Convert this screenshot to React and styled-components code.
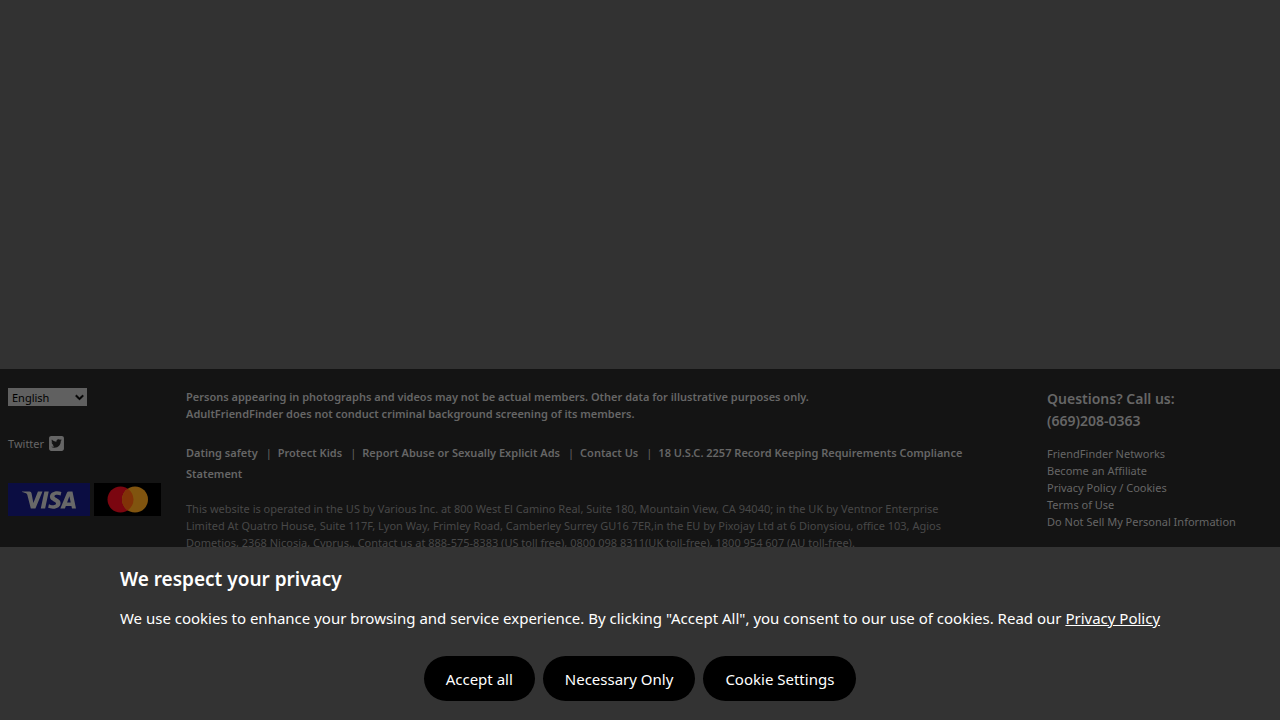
import React from "react";
import styled, { createGlobalStyle } from "styled-components";
import { FaChevronDown } from "react-icons/fa";
import { FaSquareTwitter } from "react-icons/fa6";
import { SiVisa } from "react-icons/si";

const GlobalStyle = createGlobalStyle`
  *, *::before, *::after { box-sizing: border-box; }
  body {
    margin: 0;
    background: #323232;
    color: #666;
    font: 11px/17px "Noto Sans", "Open Sans", sans-serif;
  }
  a { color: inherit; text-decoration: none; }
`;

const Page = styled.div`
  min-height: 100vh;
  display: flex;
  flex-direction: column;
`;

const Blank = styled.main`
  flex: 1;
`;

const Footer = styled.footer`
  display: grid;
  grid-template-columns: 178px 1fr 225px;
  padding: 19px 8px 169px;
  background: #141414;
`;

const Side = styled.div`
  display: flex;
  flex-direction: column;
  align-items: flex-start;
`;

const SelectWrap = styled.label`
  display: grid;
  align-items: center;
  width: 79px;
  height: 18px;
  color: #000;

  & > * { grid-area: 1 / 1; }
  svg {
    justify-self: end;
    margin-right: 3px;
    pointer-events: none;
    stroke: currentColor;
    stroke-width: 40px;
  }
`;

const Select = styled.select`
  appearance: none;
  width: 100%;
  height: 100%;
  padding: 0 4px;
  border: 0;
  border-radius: 0;
  background: #606060;
  color: #000;
  font: inherit;
`;

const Social = styled.a`
  display: flex;
  align-items: center;
  gap: 4px;
  margin-top: 29px;
`;

const Cards = styled.div`
  display: flex;
  gap: 4px;
  margin-top: 31px;
`;

const Card = styled.span`
  display: flex;
  align-items: center;
  justify-content: center;
  width: ${(p) => p.$width};
  height: 33px;
  background: ${(p) => p.$background};
  color: #686868;
`;

const Legal = styled.div`
  padding-right: 78px;
`;

const Notice = styled.p`
  margin: 0;
  font-weight: 600;
`;

const LinkLine = styled.nav`
  margin-top: 20px;
  font-weight: 600;
  line-height: 21px;

  a ~ a::before {
    content: "|";
    margin: 0 6px 0 8px;
    font-weight: 400;
  }
`;

const Address = styled.p`
  margin: 16px 0 0;
  color: #484848;
`;

const Phone = styled.p`
  margin: 0 0 13px;
  font-size: 14px;
  font-weight: 600;
  line-height: 22px;
`;

const LinkList = styled.ul`
  margin: 0;
  padding: 0;
  list-style: none;
  white-space: nowrap;
`;

const Banner = styled.section`
  position: fixed;
  inset: auto 0 0;
  display: flex;
  justify-content: center;
  padding: 18px 16px 19px;
  background: #333;
  color: #fff;
  font-size: 15px;
  line-height: 24px;
`;

const Title = styled.h2`
  margin: 0;
  font-size: 19px;
  font-weight: 600;
  line-height: 28px;
`;

const Message = styled.p`
  margin: 13px 0 26px;
  a { text-decoration: underline; }
`;

const Actions = styled.div`
  display: flex;
  flex-wrap: wrap;
  justify-content: center;
  gap: 8px;
`;

const Button = styled.button`
  height: 45px;
  padding: 0 22px;
  border: 0;
  border-radius: 23px;
  background: #000;
  color: #fff;
  font: inherit;
`;

const policies = [
  "Dating safety",
  "Protect Kids",
  "Report Abuse or Sexually Explicit Ads",
  "Contact Us",
  "18 U.S.C. 2257 Record Keeping Requirements Compliance Statement",
];

const company = [
  "FriendFinder Networks",
  "Become an Affiliate",
  "Privacy Policy / Cookies",
  "Terms of Use",
  "Do Not Sell My Personal Information",
];

function Mastercard() {
  return (
    <svg width="42" height="27" viewBox="0 0 42 27" role="img" aria-label="Mastercard">
      <circle cx="13.5" cy="13.5" r="13" fill="#7b0610" />
      <circle cx="28" cy="13.5" r="13" fill="#80540f" />
      <path d="M20.75 2.7a13 13 0 0 1 0 21.6a13 13 0 0 1 0-21.6" fill="#813208" />
    </svg>
  );
}

export default function App() {
  return (
    <Page>
      <GlobalStyle />
      <Blank />
      <Footer>
        <Side>
          <SelectWrap>
            <Select aria-label="Language" defaultValue="en">
              <option value="en">English</option>
            </Select>
            <FaChevronDown size={9} />
          </SelectWrap>
          <Social href="#twitter">
            Twitter <FaSquareTwitter size={17} />
          </Social>
          <Cards>
            <Card $width="82px" $background="#0b0d42">
              <SiVisa size={54} title="Visa" />
            </Card>
            <Card $width="67px" $background="#000">
              <Mastercard />
            </Card>
          </Cards>
        </Side>
        <Legal>
          <Notice>
            Persons appearing in photographs and videos may not be actual members. Other data for
            illustrative purposes only.
            <br />
            AdultFriendFinder does not conduct criminal background screening of its members.
          </Notice>
          <LinkLine aria-label="Policies">
            {policies.map((label) => (
              <React.Fragment key={label}>
                <a href="#policy">{label}</a>
                <wbr />
              </React.Fragment>
            ))}
          </LinkLine>
          <Address>
            This website is operated in the US by Various Inc. at 800 West El Camino Real, Suite
            180, Mountain View, CA 94040; in the UK by Ventnor Enterprise Limited At Quatro House,
            Suite 117F, Lyon Way, Frimley Road, Camberley Surrey GU16 7ER,in the EU by Pixojay Ltd
            at 6 Dionysiou, office 103, Agios Dometios, 2368 Nicosia, Cyprus.. Contact us at
            888-575-8383 (US toll free), 0800 098 8311(UK toll-free), 1800 954 607 (AU toll-free).
          </Address>
        </Legal>
        <div>
          <Phone>
            Questions? Call us:
            <br />
            (669)208-0363
          </Phone>
          <LinkList>
            {company.map((label) => (
              <li key={label}>
                <a href="#company">{label}</a>
              </li>
            ))}
          </LinkList>
        </div>
      </Footer>
      <Banner aria-labelledby="privacy-title">
        <div>
          <Title id="privacy-title">We respect your privacy</Title>
          <Message>
            We use cookies to enhance your browsing and service experience. By clicking "Accept
            All", you consent to our use of cookies. Read our <a href="#privacy">Privacy Policy</a>
          </Message>
          <Actions>
            <Button type="button">Accept all</Button>
            <Button type="button">Necessary Only</Button>
            <Button type="button">Cookie Settings</Button>
          </Actions>
        </div>
      </Banner>
    </Page>
  );
}
